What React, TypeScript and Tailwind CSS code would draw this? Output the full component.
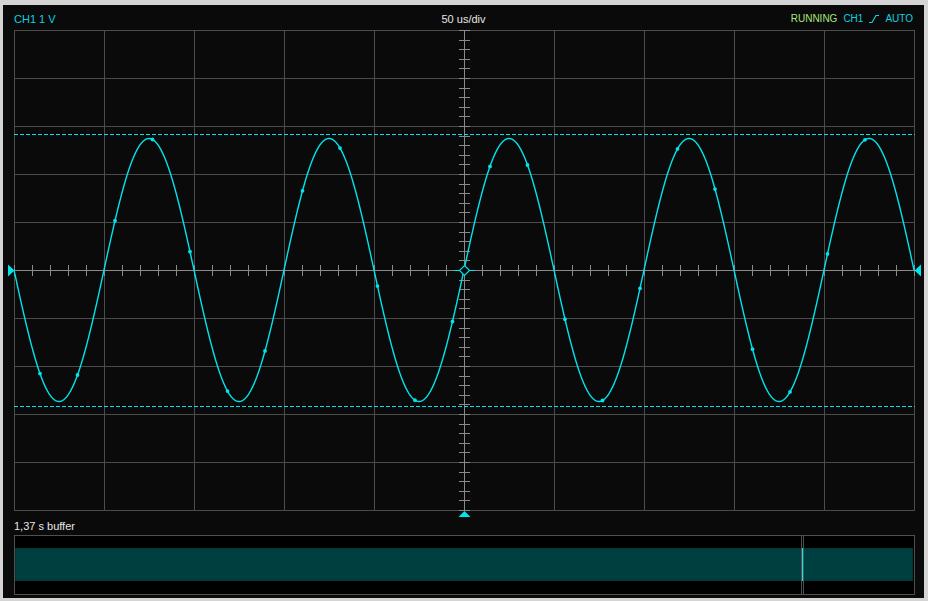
import React from "react";

const GX0 = 14;
const GX1 = 914;
const GY0 = 30;
const GY1 = 510;
const CY = 270;
const CX = 464;
const AMP = 131.5;

const sy = (x: number) => CY + AMP * Math.sin((2 * Math.PI * (x - GX0)) / 180);

function Scope() {
  const vLines = Array.from({ length: 11 }, (_, i) => GX0 + 90 * i);
  const hLines = Array.from({ length: 11 }, (_, j) => GY0 + 48 * j);
  const hTicks = Array.from({ length: 51 }, (_, k) => GX0 + 18 * k);
  const vTicks = Array.from({ length: 51 }, (_, k) => GY0 + 9.6 * k);
  let d = "";
  for (let x = GX0; x <= GX1; x += 0.5) {
    d += (x === GX0 ? "M" : "L") + x.toFixed(2) + " " + sy(x).toFixed(2) + " ";
  }
  const dots = Array.from({ length: 23 }, (_, k) => 2.5 + 37.5 * (k + 1));
  const grid = "#4c4c4c";
  const axis = "#8a8a8a";
  const cyan = "#00e4ec";
  return (
    <svg width={921} height={495} viewBox="3 25 921 495" className="block shrink-0">
      <g shapeRendering="crispEdges" stroke={grid} strokeWidth={1}>
        {vLines.map((x) => (
          <line key={"v" + x} x1={x + 0.5} y1={GY0} x2={x + 0.5} y2={GY1 + 1} />
        ))}
        {hLines.map((y) => (
          <line key={"h" + y} x1={GX0} y1={y + 0.5} x2={GX1 + 1} y2={y + 0.5} />
        ))}
      </g>
      <g shapeRendering="crispEdges" stroke={axis} strokeWidth={1}>
        <line x1={GX0} y1={CY + 0.5} x2={GX1 + 1} y2={CY + 0.5} />
        <line x1={CX + 0.5} y1={GY0} x2={CX + 0.5} y2={GY1 + 1} />
        {hTicks.map((x) => (
          <line key={"ht" + x} x1={x + 0.5} y1={CY - 5} x2={x + 0.5} y2={CY + 6} />
        ))}
        {vTicks.map((y) => (
          <line key={"vt" + y} x1={CX - 5} y1={Math.round(y) + 0.5} x2={CX + 6} y2={Math.round(y) + 0.5} />
        ))}
      </g>
      <g stroke={cyan} strokeWidth={1} strokeDasharray="4 2" shapeRendering="crispEdges">
        <line x1={GX0} y1={134.5} x2={GX1 + 1} y2={134.5} />
        <line x1={GX0} y1={406.5} x2={GX1 + 1} y2={406.5} />
      </g>
      <path d={d} fill="none" stroke={cyan} strokeWidth={1.4} strokeLinejoin="round" />
      {dots.map((x) => (
        <circle key={"d" + x} cx={x} cy={sy(x)} r={1.9} fill={cyan} />
      ))}
      <line x1={454} y1={270.5} x2={475} y2={270.5} stroke={cyan} strokeWidth={1} shapeRendering="crispEdges" />
      <path d="M464.5 265.5 L469.5 270.5 L464.5 275.5 L459.5 270.5 Z" fill="#0a0a0a" stroke={cyan} strokeWidth={1.2} />
      <path d="M8 264.5 L14.5 270.5 L8 276.5 Z" fill={cyan} />
      <path d="M921 264.5 L914.5 270.5 L921 276.5 Z" fill={cyan} />
      <path d="M464.5 511 L470.5 517 L458.5 517 Z" fill={cyan} />
    </svg>
  );
}

function TrigIcon() {
  return (
    <svg width={10} height={10} viewBox="0 0 10 10" className="inline-block">
      <polyline points="0,8.5 3,8.5 7,1.5 10,1.5" fill="none" stroke="#10d8e4" strokeWidth={1.1} />
    </svg>
  );
}

export default function App() {
  return (
    <div
      className="w-[928px] h-[601px] bg-[#d4d4d4] pt-[5px] pl-[3px] pr-[4px] pb-[3px] overflow-hidden"
      style={{ fontFamily: '"Liberation Sans", Arial, sans-serif' }}
    >
      <div className="w-[921px] h-[593px] bg-[#0a0a0a] flex flex-col">
        <div className="h-[20px] pt-[8px] pl-[11px] pr-[11px] flex items-start text-[11px] leading-[12px] shrink-0">
          <div className="flex-1 text-[#10d0e0]">CH1 1 V</div>
          <div className="flex-1 text-center text-[#e6e6e6]">50 us/div</div>
          <div className="flex-1 flex justify-end items-center gap-[6px] text-[10px]">
            <span className="text-[#a8e47c]">RUNNING</span>
            <span className="text-[#10d0e0]">CH1</span>
            <TrigIcon />
            <span className="text-[#10d0e0]">AUTO</span>
          </div>
        </div>
        <Scope />
        <div className="h-[15px] pl-[11px] text-[11px] leading-[12px] text-[#e6e6e6] shrink-0">1,37 s buffer</div>
        <div className="ml-[11px] w-[901px] h-[60px] border border-[#505050] bg-black relative shrink-0">
          <div className="mt-[12px] h-[33px] mr-[1px] bg-[#003f40] border border-[#033536]" />
          <div className="absolute top-0 bottom-0 left-[786px] w-[1px] bg-[#505050]" />
          <div className="absolute top-0 bottom-0 left-[788px] w-[1px] bg-[#505050]" />
          <div className="absolute top-[12px] h-[33px] left-[787px] w-[1px] bg-[#00f0f8]" />
        </div>
      </div>
    </div>
  );
}
